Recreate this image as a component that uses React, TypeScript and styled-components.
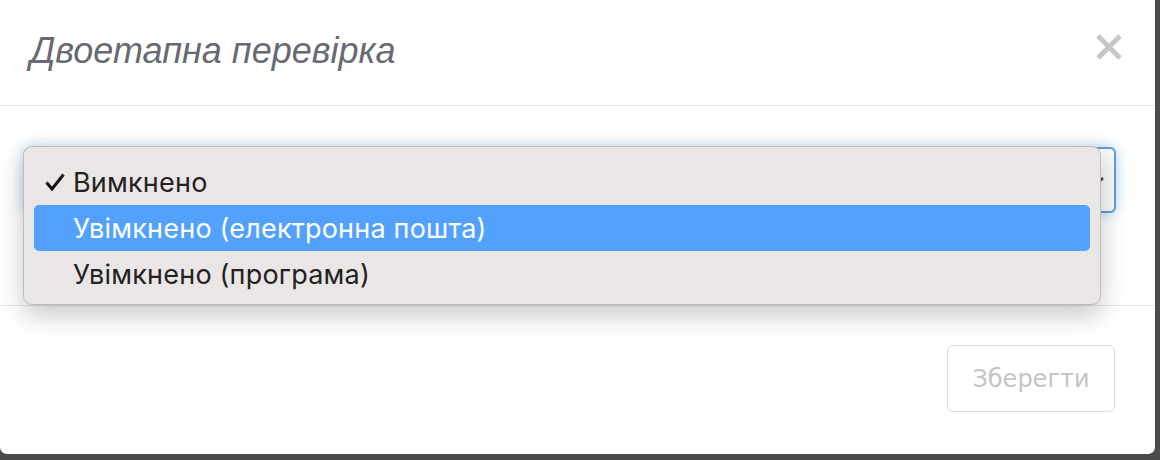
import styled, { createGlobalStyle } from "styled-components";

const GlobalStyle = createGlobalStyle`
  html, body {
    margin: 0;
    padding: 0;
    background: #4b4b4b;
  }
  body {
    width: 1160px;
    height: 460px;
    overflow: hidden;
  }
`;

const Modal = styled.div`
  width: 1155px;
  height: 454px;
  background: #fff;
  border-bottom-right-radius: 7px;
  border-bottom-left-radius: 7px;
  display: flex;
  flex-direction: column;
  font-family: "Liberation Sans", Arial, sans-serif;
`;

const Header = styled.header`
  height: 106px;
  box-sizing: border-box;
  padding: 0 33px 0 30px;
  display: flex;
  align-items: center;
  justify-content: space-between;
  border-bottom: 1px solid #e5e5e5;
`;

const Title = styled.h4`
  margin: 0;
  font-size: 36px;
  font-style: italic;
  font-weight: normal;
  color: #676a70;
  padding-bottom: 4px;
`;

const Close = styled.button`
  border: 0;
  background: none;
  padding: 0;
  width: 26px;
  height: 26px;
  display: flex;
  cursor: pointer;
  margin-bottom: 12px;
`;

const Body = styled.div`
  position: relative;
  height: 200px;
  box-sizing: border-box;
  padding: 41px 39px 0 24px;
  border-bottom: 1px solid #e5e5e5;
`;

const Select = styled.div`
  height: 66px;
  box-sizing: border-box;
  border: 2px solid #5b9fdf;
  border-radius: 6px;
  background: #fafafa;
  box-shadow: 0 0 14px rgba(90, 160, 225, 0.45);
  display: flex;
  align-items: center;
  justify-content: flex-end;
  padding-right: 8px;
`;

const Menu = styled.ul`
  position: absolute;
  left: 23px;
  top: 40px;
  width: 1078px;
  height: 159px;
  box-sizing: border-box;
  margin: 0;
  padding: 12px 10px 0;
  list-style: none;
  background: #ebe6e6;
  border: 1px solid rgba(0, 0, 0, 0.18);
  border-radius: 9px;
  box-shadow: 0 10px 26px rgba(0, 0, 0, 0.22);
  font-family: Inter, "Noto Sans", sans-serif;
`;

const Item = styled.li<{ $active?: boolean }>`
  height: 46px;
  display: flex;
  align-items: center;
  border-radius: 5px;
  padding-left: 11px;
  font-size: 27px;
  letter-spacing: 0.2px;
  color: ${(p) => (p.$active ? "#fff" : "#222")};
  background: ${(p) => (p.$active ? "#52a2fd" : "transparent")};
`;

const Check = styled.span`
  width: 28px;
  display: flex;
  align-items: center;
`;

const Footer = styled.footer`
  flex: 1;
  display: flex;
  justify-content: flex-end;
  align-items: flex-start;
  padding: 39px 40px 0 0;
`;

const Button = styled.button`
  width: 168px;
  height: 67px;
  background: #fff;
  border: 1px solid #dcdcdc;
  border-radius: 6px;
  color: #c4c4c4;
  font-family: "DejaVu Sans", Verdana, sans-serif;
  font-size: 24px;
  padding: 0;
`;

const options = [
  "Вимкнено",
  "Увімкнено (електронна пошта)",
  "Увімкнено (програма)",
];

const App = () => {
  return (
    <>
      <GlobalStyle />
      <Modal>
        <Header>
          <Title>Двоетапна перевірка</Title>
          <Close aria-label="Закрити">
            <svg width="26" height="26" viewBox="0 0 26 26">
              <path d="M2 2 L24 24 M24 2 L2 24" stroke="#c6c6c6" strokeWidth="5" />
            </svg>
          </Close>
        </Header>
        <Body>
          <Select>
            <svg width="14" height="14" viewBox="0 0 14 14">
              <path d="M3 5 L7 9 L11 5" stroke="#444" strokeWidth="2.5" fill="none" />
            </svg>
          </Select>
          <Menu>
            {options.map((o, i) => (
              <Item key={o} $active={i === 1}>
                <Check>
                  {i === 0 && (
                    <svg width="20" height="18" viewBox="0 0 20 18">
                      <path d="M1.5 9.5 L7 16 L18.5 1.5" stroke="#111" strokeWidth="3" fill="none" />
                    </svg>
                  )}
                </Check>
                {o}
              </Item>
            ))}
          </Menu>
        </Body>
        <Footer>
          <Button disabled>Зберегти</Button>
        </Footer>
      </Modal>
    </>
  );
};

export default App;
